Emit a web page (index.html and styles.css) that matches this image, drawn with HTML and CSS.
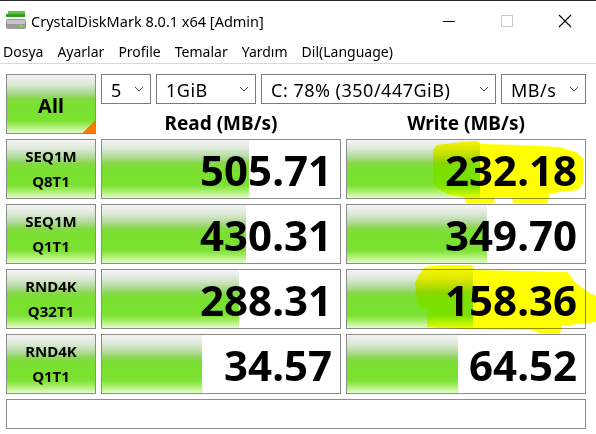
FILE: index.html
```html
<!DOCTYPE html>
<html>
<head>
    <title>CrystalDiskMark 8.0.1 x64 [Admin]</title>
    <link rel="stylesheet" href="styles.css">
</head>
<body>
    <div class="window">
        <div class="titlebar">
            <svg class="app-icon" width="22" height="22" viewBox="0 0 22 22">
                <rect x="3" y="1" width="17" height="3" fill="#5fc93a"/>
                <rect x="1" y="4" width="19" height="3" fill="#2f9d26"/>
                <rect x="1" y="9" width="20" height="10" rx="2" fill="#9a9a9a"/>
                <rect x="2" y="10" width="18" height="4" rx="1" fill="#c4c4c4"/>
                <rect x="15" y="15" width="3" height="2" fill="#6fe23a"/>
            </svg>
            <span class="title">CrystalDiskMark 8.0.1 x64 [Admin]</span>
            <div class="controls">
                <span class="ctl">
                    <svg width="14" height="14" viewBox="0 0 14 14"><line x1="1" y1="7.5" x2="13" y2="7.5" stroke="#000" stroke-width="1"/></svg>
                </span>
                <span class="ctl">
                    <svg width="14" height="14" viewBox="0 0 14 14"><rect x="1.5" y="1.5" width="11" height="11" fill="none" stroke="#c8c8c8" stroke-width="1"/></svg>
                </span>
                <span class="ctl">
                    <svg width="14" height="14" viewBox="0 0 14 14"><path d="M1 1 L13 13 M13 1 L1 13" stroke="#000" stroke-width="1.1"/></svg>
                </span>
            </div>
        </div>

        <div class="menubar">
            <span>Dosya</span>
            <span>Ayarlar</span>
            <span>Profile</span>
            <span>Temalar</span>
            <span>Yardım</span>
            <span>Dil(Language)</span>
        </div>

        <div class="board">
            <div class="btn all">All</div>

            <div class="settings">
                <div class="combos">
                    <div class="combo w-count">5<svg class="chev" width="10" height="6" viewBox="0 0 10 6"><path d="M1 1 L5 5 L9 1" fill="none" stroke="#444" stroke-width="1"/></svg></div>
                    <div class="combo w-size">1GiB<svg class="chev" width="10" height="6" viewBox="0 0 10 6"><path d="M1 1 L5 5 L9 1" fill="none" stroke="#444" stroke-width="1"/></svg></div>
                    <div class="combo w-drive">C: 78% (350/447GiB)<svg class="chev" width="10" height="6" viewBox="0 0 10 6"><path d="M1 1 L5 5 L9 1" fill="none" stroke="#444" stroke-width="1"/></svg></div>
                    <div class="combo w-unit">MB/s<svg class="chev" width="10" height="6" viewBox="0 0 10 6"><path d="M1 1 L5 5 L9 1" fill="none" stroke="#444" stroke-width="1"/></svg></div>
                </div>
                <div class="heads">
                    <div>Read (MB/s)</div>
                    <div>Write (MB/s)</div>
                </div>
            </div>

            <div class="btn test">SEQ1M<br>Q8T1</div>
            <div class="meter" style="background-size: 147px 100%">505.71</div>
            <div class="meter" style="background-size: 133px 100%">232.18</div>

            <div class="btn test">SEQ1M<br>Q1T1</div>
            <div class="meter" style="background-size: 144px 100%">430.31</div>
            <div class="meter" style="background-size: 140px 100%">349.70</div>

            <div class="btn test">RND4K<br>Q32T1</div>
            <div class="meter" style="background-size: 137px 100%">288.31</div>
            <div class="meter" style="background-size: 126px 100%">158.36</div>

            <div class="btn test">RND4K<br>Q1T1</div>
            <div class="meter" style="background-size: 100px 100%">34.57</div>
            <div class="meter" style="background-size: 111px 100%">64.52</div>

            <div class="comment"></div>
        </div>

        <!-- highlighter marks drawn over the screenshot -->
        <svg class="marker" width="596" height="434" viewBox="0 0 596 434">
            <path d="M433 150 L437 145 L452 143 L476 141 L482 144 L520 145 L560 147 L576 152 L583 158 L583 183 L578 190 L560 192 L549 194 L548 203 L513 203 L512 197 L495 197 L494 203 L466 203 L464 197 L450 195 L440 190 L433 184 Z"/>
            <path d="M415 283 L418 276 L425 267 L440 265 L472 265 L474 270 L520 271 L567 272 L577 284 L590 293 L596 296 L596 322 L585 323 L562 326 L560 333 L540 333 L530 330 L470 329 L440 328 L427 327 L427 310 L417 305 Z"/>
        </svg>
    </div>
</body>
</html>
```

FILE: styles.css
```css
body {
    margin: 0;
    background: #fff;
    font-family: "Noto Sans", "Open Sans", sans-serif;
    color: #000;
}

.window {
    position: relative;
    width: 596px;
    height: 434px;
    overflow: hidden;
    background: #fff;
    border-top: 1px solid #2b2b2b;
    box-sizing: border-box;
}

.titlebar {
    display: flex;
    align-items: center;
    height: 39px;
    padding-left: 5px;
}

.app-icon {
    margin-top: 1px;
}

.title {
    margin-left: 4px;
    font-size: 14.5px;
}

.controls {
    display: flex;
    margin-left: auto;
    margin-right: 2px;
}

.ctl {
    display: flex;
    align-items: center;
    justify-content: center;
    width: 58px;
    height: 39px;
}

.menubar {
    display: flex;
    gap: 14px;
    height: 23px;
    padding-left: 3px;
    border-bottom: 1px solid #d9d9d9;
    font-size: 14px;
    line-height: 23px;
}

.board {
    display: grid;
    grid-template-columns: 90px 240px 240px;
    grid-template-rows: 60px 60px 60px 60px 60px 30px;
    gap: 5px;
    padding: 10px 0 0 6px;
}

.btn {
    display: flex;
    align-items: center;
    justify-content: center;
    border: 1px solid #8c8c8c;
    background: linear-gradient(#f4f4f4 0%, #dde9d8 15%, #b0da98 30%, #86d84a 40%, #7ae030 50%, #7be232 78%, #a8ee6a 88%, #e4fbcc 100%);
    box-sizing: border-box;
    font-weight: bold;
    text-align: center;
}

.all {
    position: relative;
    padding-top: 3px;
    font-size: 20px;
}

.all::after {
    content: "";
    position: absolute;
    right: 0;
    bottom: 0;
    width: 12px;
    height: 12px;
    background: linear-gradient(to bottom right, transparent 50%, #ff7800 50%);
}

.test {
    font-size: 15px;
    line-height: 25px;
}

.settings {
    grid-column: 2 / 4;
    display: grid;
    grid-template-rows: 30px 30px;
}

.combos {
    display: flex;
    gap: 5px;
}

.combo {
    display: flex;
    align-items: center;
    padding: 2px 6px 0 9px;
    border: 1px solid #7a7a7a;
    box-sizing: border-box;
    font-size: 18px;
    letter-spacing: 0.5px;
}

.chev {
    margin-left: auto;
    margin-top: -2px;
}

.w-count { width: 50px; }
.w-size { width: 100px; }
.w-drive { width: 235px; }
.w-unit { width: 85px; }

.heads {
    display: grid;
    grid-template-columns: 240px 240px;
    gap: 5px;
    align-items: end;
    font-size: 19px;
    font-weight: bold;
    line-height: 22px;
    text-align: center;
}

.meter {
    display: flex;
    align-items: center;
    justify-content: flex-end;
    padding: 2px 8px 0 0;
    border: 1px solid #8c8c8c;
    box-sizing: border-box;
    background: linear-gradient(#f4f4f4 0%, #dde9d8 15%, #b0da98 30%, #86d84a 40%, #7ae030 50%, #7be232 78%, #a8ee6a 88%, #e4fbcc 100%) no-repeat;
    font-size: 42px;
    font-weight: bold;
    line-height: 1;
}

.comment {
    grid-column: 1 / 4;
    border: 1px solid #8c8c8c;
}

.marker {
    position: absolute;
    left: 0;
    top: -1px;
    fill: #ffff00;
    mix-blend-mode: multiply;
    pointer-events: none;
}
```
